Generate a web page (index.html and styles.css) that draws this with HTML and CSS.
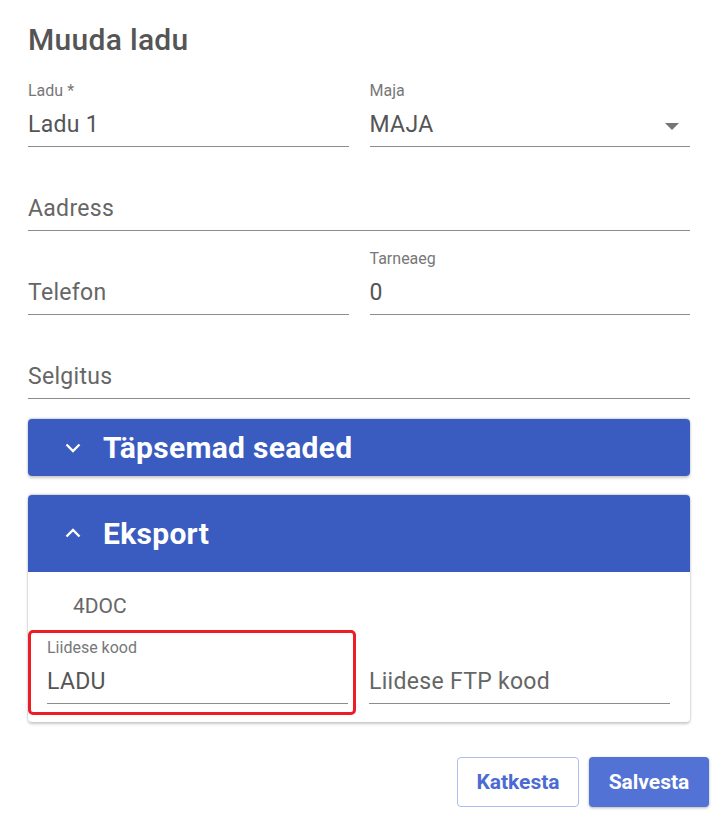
FILE: index.html
```html
<!DOCTYPE html>
<html lang="et">
<head>
<meta charset="utf-8">
<title>Muuda ladu</title>
<link rel="stylesheet" href="styles.css">
</head>
<body>
<div class="dialog">
  <h1 class="title">Muuda ladu</h1>
  <div class="form">
    <div class="row two">
      <div class="field">
        <div class="lbl">Ladu *</div>
        <div class="val">Ladu 1</div>
      </div>
      <div class="field">
        <div class="lbl">Maja</div>
        <div class="val select">MAJA<span class="arrow"></span></div>
      </div>
    </div>
    <div class="row">
      <div class="field">
        <div class="lbl"></div>
        <div class="val ph">Aadress</div>
      </div>
    </div>
    <div class="row two">
      <div class="field">
        <div class="lbl"></div>
        <div class="val ph">Telefon</div>
      </div>
      <div class="field">
        <div class="lbl">Tarneaeg</div>
        <div class="val">0</div>
      </div>
    </div>
    <div class="row">
      <div class="field">
        <div class="lbl"></div>
        <div class="val ph">Selgitus</div>
      </div>
    </div>
  </div>

  <div class="panel collapsed">
    <div class="panel-head short">
      <svg class="chev" width="18" height="11" viewBox="0 0 18 11"><path d="M2.5 2.5 L9 9 L15.5 2.5" fill="none" stroke="#fff" stroke-width="2.4"/></svg>
      <span class="panel-title">Täpsemad seaded</span>
    </div>
  </div>

  <div class="panel">
    <div class="panel-head tall">
      <svg class="chev" width="18" height="11" viewBox="0 0 18 11"><path d="M2.5 8.5 L9 2 L15.5 8.5" fill="none" stroke="#fff" stroke-width="2.4"/></svg>
      <span class="panel-title">Eksport</span>
    </div>
    <div class="panel-body">
      <div class="sub">4DOC</div>
      <div class="row two">
        <div class="field marked">
          <div class="lbl">Liidese kood</div>
          <div class="val">LADU</div>
          <span class="mark"></span>
        </div>
        <div class="field">
          <div class="lbl"></div>
          <div class="val ph">Liidese FTP kood</div>
        </div>
      </div>
    </div>
  </div>

  <div class="actions">
    <button class="btn ghost">Katkesta</button>
    <button class="btn primary">Salvesta</button>
  </div>
</div>
</body>
</html>
```

FILE: styles.css
```css
* { box-sizing: border-box; }
html, body { margin: 0; padding: 0; background: #fff; }
body {
  font-family: Roboto, "Noto Sans", "Liberation Sans", sans-serif;
  color: #555;
  width: 715px;
  height: 815px;
  overflow: hidden;
}
.dialog {
  padding: 23px 25px 0 28px;
}
.title {
  margin: 0 0 25px 0;
  font-size: 30px;
  line-height: 34px;
  font-weight: 500;
  color: #555;
  letter-spacing: 0.3px;
}
.form {
  display: flex;
  flex-direction: column;
  gap: 19px;
}
.row {
  display: grid;
  grid-template-columns: 1fr;
}
.row.two {
  grid-template-columns: 1fr 1fr;
  column-gap: 21px;
}
.field {
  position: relative;
  border-bottom: 1px solid #8c8c8c;
  padding-bottom: 7px;
}
.lbl {
  height: 18px;
  line-height: 18px;
  font-size: 16px;
  color: #777;
  margin-bottom: 11px;
}
.val {
  height: 28px;
  line-height: 28px;
  font-size: 23px;
  color: #555;
  letter-spacing: 0.3px;
}
.val.ph {
  color: #666;
}
.val.select {
  display: flex;
  align-items: center;
  justify-content: space-between;
}
.arrow {
  width: 0;
  height: 0;
  border-left: 7px solid transparent;
  border-right: 7px solid transparent;
  border-top: 7px solid #757575;
  margin-right: 11px;
  margin-top: 2px;
}

.panel {
  margin-top: 19px;
  border-radius: 4px;
  background: #fff;
  box-shadow: 0 -1px 2px rgba(0,0,0,0.18), 0 2px 3px rgba(0,0,0,0.22);
}
.form + .panel { margin-top: 20px; }
.panel-head {
  background: #3a5bbf;
  color: #fff;
  display: flex;
  align-items: center;
  padding-left: 36px;
  border-radius: 4px 4px 0 0;
}
.panel.collapsed .panel-head { border-radius: 4px; }
.panel-head.short { height: 57px; }
.panel-head.tall { height: 77px; }
.chev { flex: none; margin-right: 21px; }
.panel-title {
  font-size: 30px;
  font-weight: 700;
  letter-spacing: 0.3px;
}
.panel-body {
  padding: 22px 20px 18px 19px;
}
.sub {
  padding-left: 26px;
  height: 24px;
  line-height: 24px;
  font-size: 21px;
  color: #666;
  margin-bottom: 21px;
}
.mark {
  position: absolute;
  left: -19px;
  right: -8px;
  top: -9px;
  bottom: -12px;
  border: 3px solid #ee1c25;
  border-radius: 5px;
  pointer-events: none;
}

.actions {
  display: flex;
  justify-content: flex-end;
  gap: 10px;
  margin-top: 35px;
  margin-right: -19px;
}
.btn {
  height: 50px;
  border-radius: 4px;
  font-family: Roboto, "Noto Sans", "Liberation Sans", sans-serif;
  font-size: 21px;
  font-weight: 700;
  cursor: pointer;
}
.btn.ghost {
  width: 122px;
  background: #fff;
  color: #4c6bd2;
  border: 1px solid #aebdee;
}
.btn.primary {
  width: 120px;
  background: #5272d6;
  color: #fff;
  border: none;
  box-shadow: 0 1px 3px rgba(0,0,0,0.3);
}
```
